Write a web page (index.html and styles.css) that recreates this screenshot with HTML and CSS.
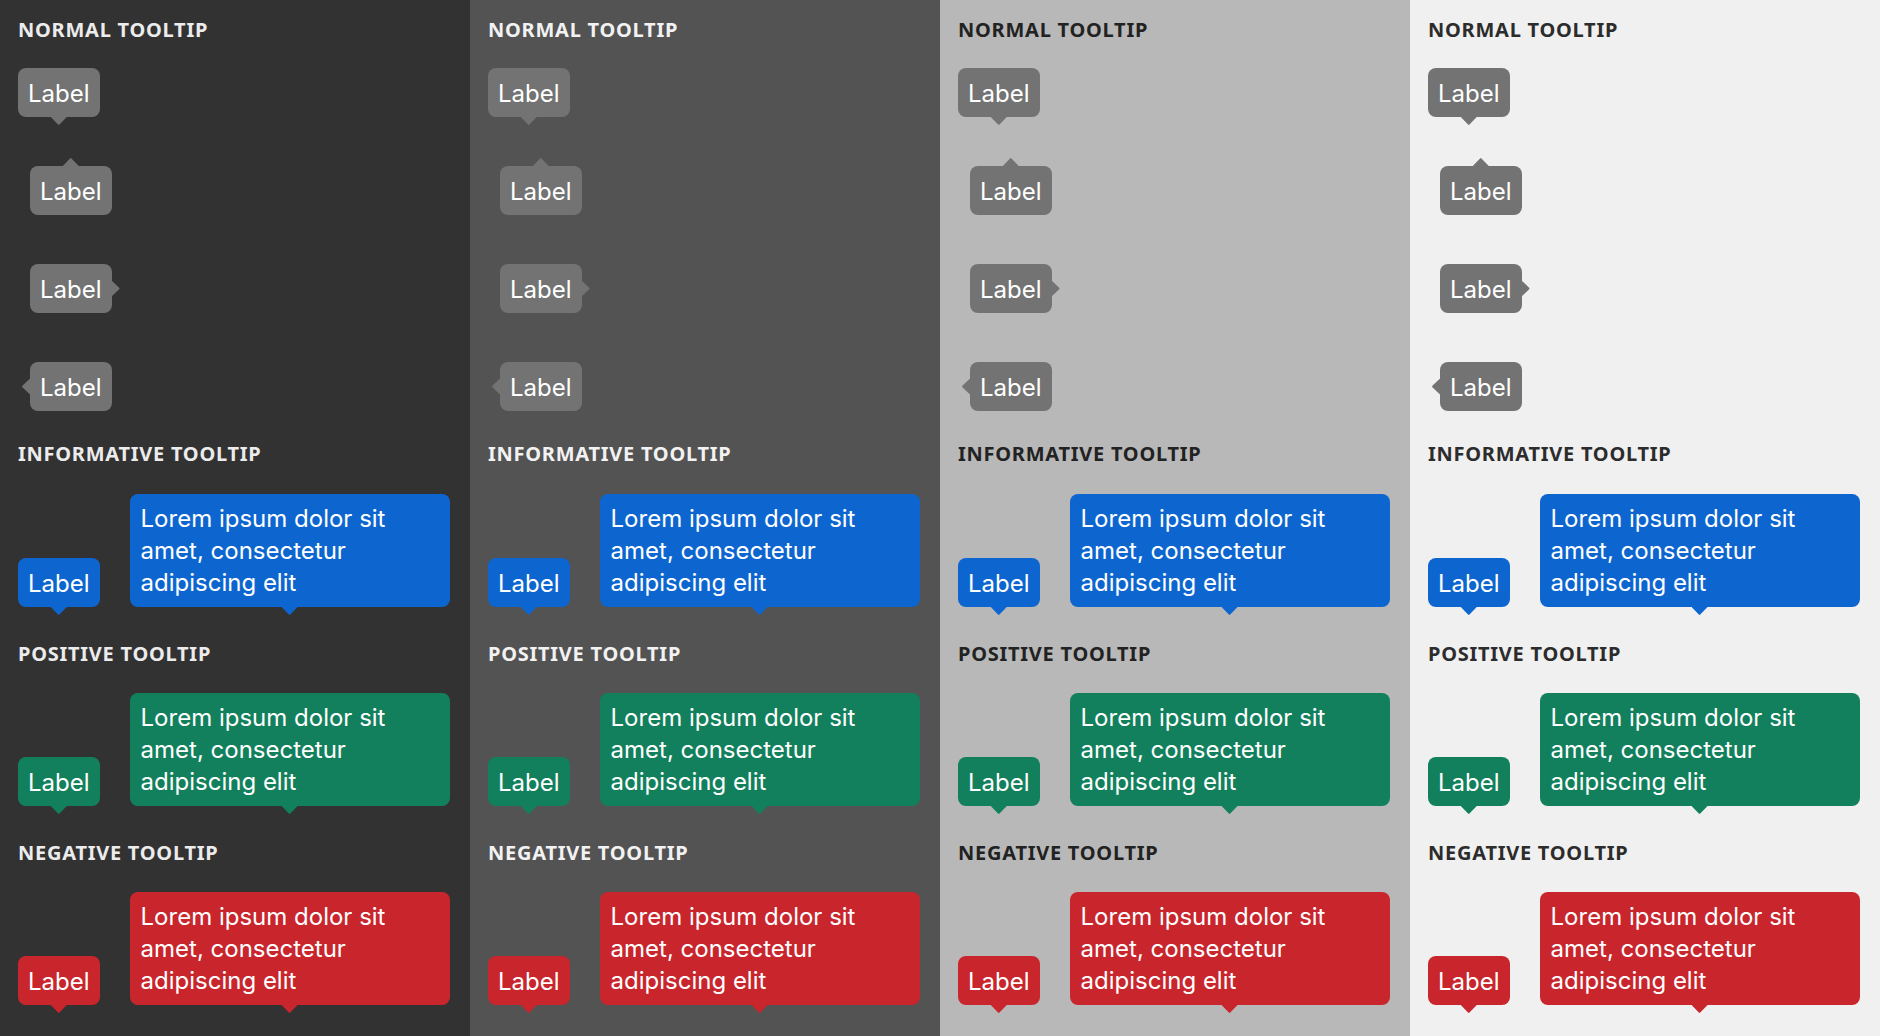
FILE: index.html
```html
<!DOCTYPE html>
<html lang="en">
<head>
<meta charset="utf-8">
<title>Tooltips</title>
<link rel="stylesheet" href="styles.css">
</head>
<body>
<main class="themes">
  <section class="theme theme-darkest">
    <div class="group group-normal">
      <h2 class="heading">Normal tooltip</h2>
      <div class="normal-list">
        <span class="tooltip neutral tip-bottom">Label</span>
        <span class="tooltip neutral tip-top indent">Label</span>
        <span class="tooltip neutral tip-right indent">Label</span>
        <span class="tooltip neutral tip-left indent">Label</span>
      </div>
    </div>
    <div class="group group-info">
      <h2 class="heading">Informative tooltip</h2>
      <div class="pair">
        <span class="tooltip info tip-bottom">Label</span>
        <span class="tooltip info tip-bottom wide">Lorem ipsum dolor sit amet, consectetur adipiscing elit</span>
      </div>
    </div>
    <div class="group">
      <h2 class="heading">Positive tooltip</h2>
      <div class="pair">
        <span class="tooltip positive tip-bottom">Label</span>
        <span class="tooltip positive tip-bottom wide">Lorem ipsum dolor sit amet, consectetur adipiscing elit</span>
      </div>
    </div>
    <div class="group">
      <h2 class="heading">Negative tooltip</h2>
      <div class="pair">
        <span class="tooltip negative tip-bottom">Label</span>
        <span class="tooltip negative tip-bottom wide">Lorem ipsum dolor sit amet, consectetur adipiscing elit</span>
      </div>
    </div>
  </section>

  <section class="theme theme-dark">
    <div class="group group-normal">
      <h2 class="heading">Normal tooltip</h2>
      <div class="normal-list">
        <span class="tooltip neutral tip-bottom">Label</span>
        <span class="tooltip neutral tip-top indent">Label</span>
        <span class="tooltip neutral tip-right indent">Label</span>
        <span class="tooltip neutral tip-left indent">Label</span>
      </div>
    </div>
    <div class="group group-info">
      <h2 class="heading">Informative tooltip</h2>
      <div class="pair">
        <span class="tooltip info tip-bottom">Label</span>
        <span class="tooltip info tip-bottom wide">Lorem ipsum dolor sit amet, consectetur adipiscing elit</span>
      </div>
    </div>
    <div class="group">
      <h2 class="heading">Positive tooltip</h2>
      <div class="pair">
        <span class="tooltip positive tip-bottom">Label</span>
        <span class="tooltip positive tip-bottom wide">Lorem ipsum dolor sit amet, consectetur adipiscing elit</span>
      </div>
    </div>
    <div class="group">
      <h2 class="heading">Negative tooltip</h2>
      <div class="pair">
        <span class="tooltip negative tip-bottom">Label</span>
        <span class="tooltip negative tip-bottom wide">Lorem ipsum dolor sit amet, consectetur adipiscing elit</span>
      </div>
    </div>
  </section>

  <section class="theme theme-light">
    <div class="group group-normal">
      <h2 class="heading">Normal tooltip</h2>
      <div class="normal-list">
        <span class="tooltip neutral tip-bottom">Label</span>
        <span class="tooltip neutral tip-top indent">Label</span>
        <span class="tooltip neutral tip-right indent">Label</span>
        <span class="tooltip neutral tip-left indent">Label</span>
      </div>
    </div>
    <div class="group group-info">
      <h2 class="heading">Informative tooltip</h2>
      <div class="pair">
        <span class="tooltip info tip-bottom">Label</span>
        <span class="tooltip info tip-bottom wide">Lorem ipsum dolor sit amet, consectetur adipiscing elit</span>
      </div>
    </div>
    <div class="group">
      <h2 class="heading">Positive tooltip</h2>
      <div class="pair">
        <span class="tooltip positive tip-bottom">Label</span>
        <span class="tooltip positive tip-bottom wide">Lorem ipsum dolor sit amet, consectetur adipiscing elit</span>
      </div>
    </div>
    <div class="group">
      <h2 class="heading">Negative tooltip</h2>
      <div class="pair">
        <span class="tooltip negative tip-bottom">Label</span>
        <span class="tooltip negative tip-bottom wide">Lorem ipsum dolor sit amet, consectetur adipiscing elit</span>
      </div>
    </div>
  </section>

  <section class="theme theme-lightest">
    <div class="group group-normal">
      <h2 class="heading">Normal tooltip</h2>
      <div class="normal-list">
        <span class="tooltip neutral tip-bottom">Label</span>
        <span class="tooltip neutral tip-top indent">Label</span>
        <span class="tooltip neutral tip-right indent">Label</span>
        <span class="tooltip neutral tip-left indent">Label</span>
      </div>
    </div>
    <div class="group group-info">
      <h2 class="heading">Informative tooltip</h2>
      <div class="pair">
        <span class="tooltip info tip-bottom">Label</span>
        <span class="tooltip info tip-bottom wide">Lorem ipsum dolor sit amet, consectetur adipiscing elit</span>
      </div>
    </div>
    <div class="group">
      <h2 class="heading">Positive tooltip</h2>
      <div class="pair">
        <span class="tooltip positive tip-bottom">Label</span>
        <span class="tooltip positive tip-bottom wide">Lorem ipsum dolor sit amet, consectetur adipiscing elit</span>
      </div>
    </div>
    <div class="group">
      <h2 class="heading">Negative tooltip</h2>
      <div class="pair">
        <span class="tooltip negative tip-bottom">Label</span>
        <span class="tooltip negative tip-bottom wide">Lorem ipsum dolor sit amet, consectetur adipiscing elit</span>
      </div>
    </div>
  </section>
</main>
</body>
</html>
```

FILE: styles.css
```css
* {
  box-sizing: border-box;
}

html, body {
  margin: 0;
  padding: 0;
}

body {
  font-family: "Noto Sans", "Open Sans", sans-serif;
  -webkit-font-smoothing: antialiased;
}

.themes {
  display: grid;
  grid-template-columns: repeat(4, 470px);
  height: 1036px;
  overflow: hidden;
}

.theme {
  padding: 20px 20px 0 18px;
  display: flex;
  flex-direction: column;
}

.theme-darkest {
  background: #323232;
  --heading: #ececec;
}

.theme-dark {
  background: #535353;
  --heading: #f2f2f2;
}

.theme-light {
  background: #b8b8b8;
  --heading: #222222;
}

.theme-lightest {
  background: #f0f0f0;
  --heading: #2c2c2c;
}

.heading {
  margin: 0 0 29px;
  font-family: "Noto Sans", "Open Sans", sans-serif;
  font-size: 20px;
  line-height: 20px;
  font-weight: 700;
  text-transform: uppercase;
  letter-spacing: 0.75px;
  color: var(--heading);
}

.group {
  margin-top: 37px;
}

.group-normal {
  margin-top: 0;
}

.group-normal .heading {
  margin-bottom: 28px;
}

.group-info {
  margin-top: 33px;
}

.group-info .heading {
  margin-bottom: 30px;
}

.normal-list {
  display: flex;
  flex-direction: column;
  align-items: flex-start;
  gap: 49px;
}

.indent {
  margin-left: 12px;
}

.pair {
  display: flex;
  align-items: flex-end;
  gap: 30px;
}

.tooltip {
  position: relative;
  display: inline-block;
  padding: 10px 10px 7px 10px;
  border-radius: 8px;
  font-family: Inter, "Noto Sans", sans-serif;
  font-size: 24px;
  line-height: 32px;
  color: #ffffff;
  white-space: nowrap;
}

.tooltip.wide {
  width: 320px;
  padding: 9px 10px 8px 11px;
  white-space: normal;
}

.neutral {
  background: #737373;
}

.info {
  background: #0d66d0;
}

.positive {
  background: #12805c;
}

.negative {
  background: #c9252d;
}

.tooltip::after {
  content: "";
  position: absolute;
  background: inherit;
}

.tip-bottom::after {
  width: 16px;
  height: 8px;
  left: 50%;
  top: 100%;
  margin-left: -8px;
  clip-path: polygon(0 0, 100% 0, 56% 92%, 50% 100%, 44% 92%);
}

.tip-top::after {
  width: 16px;
  height: 8px;
  left: 50%;
  bottom: 100%;
  margin-left: -8px;
  clip-path: polygon(0 100%, 100% 100%, 56% 8%, 50% 0, 44% 8%);
}

.tip-right::after {
  width: 8px;
  height: 16px;
  left: 100%;
  top: 50%;
  margin-top: -8px;
  clip-path: polygon(0 0, 0 100%, 92% 56%, 100% 50%, 92% 44%);
}

.tip-left::after {
  width: 8px;
  height: 16px;
  right: 100%;
  top: 50%;
  margin-top: -8px;
  clip-path: polygon(100% 0, 100% 100%, 8% 56%, 0 50%, 8% 44%);
}
```
